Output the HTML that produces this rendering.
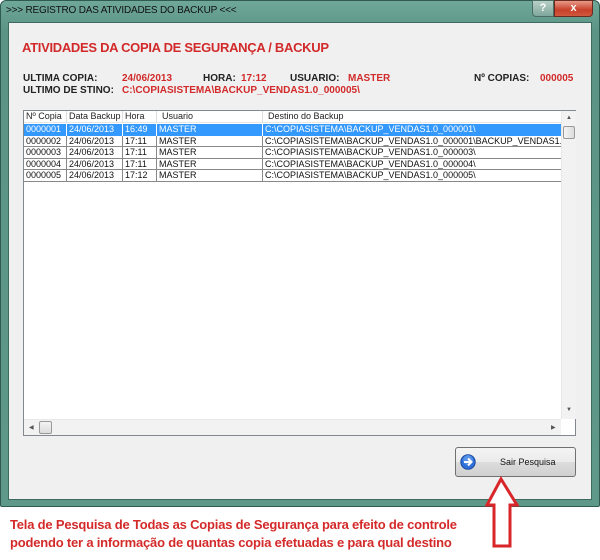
<!DOCTYPE html>
<html><head><meta charset="utf-8"><style>
*{margin:0;padding:0;box-sizing:border-box}
body{width:600px;height:560px;background:#fff;position:relative;overflow:hidden;font-family:"Liberation Sans",sans-serif}
.abs{position:absolute}
.frame{left:0;top:0;width:600px;height:507px;background:linear-gradient(#6fa898,#5b9484 30px,#5e9888);border-radius:6px 6px 2px 2px;border:1px solid #2f5a50}
.client{left:8px;top:22px;width:584px;height:478px;background:#f0f0f0;border:1px solid #3f6a60}
.title{left:6px;top:5px;font-size:10px;color:#111;letter-spacing:-0.2px}
.lbl{font-size:10px;font-weight:bold;color:#222}
.red{color:#d22a2a}
.lbl.red{color:#d22a2a}
.list{left:23px;top:110px;width:553px;height:326px;background:#fff;border:1px solid #828790}
.hdr{left:0;top:0;height:12px;width:537px;font-size:9px;color:#222;background:#fff;border-bottom:1px solid #e5e5e5}
.row{left:0;height:11.6px;width:537px;font-size:9px;color:#111}
.c{position:absolute;top:0;height:100%;border-right:1px solid #888;padding-left:2px;white-space:nowrap;overflow:hidden;line-height:11px}
.sel{background:#3399ff;color:#fff}
.sel .c{border-right-color:#fff}
</style></head><body>
<div class="abs frame"></div>
<div class="abs title">&gt;&gt;&gt; REGISTRO DAS ATIVIDADES DO BACKUP &lt;&lt;&lt;</div>
<div class="abs" style="left:532px;top:0;width:22px;height:17px;background:linear-gradient(#b8d0c8,#7fa69a);border:1px solid #4a6e64;border-radius:0 0 0 4px;color:#fff;font-size:11px;font-weight:bold;text-align:center;line-height:15px">?</div>
<div class="abs" style="left:554px;top:0;width:39px;height:17px;background:linear-gradient(#e89a88,#c8402a 60%,#d0583e);border:1px solid #6a2a20;border-radius:0 0 4px 0;color:#fff;font-size:11px;font-weight:bold;text-align:center;line-height:15px">x</div>
<div class="abs client"></div>
<div class="abs red" style="left:22px;top:40px;font-size:13px;font-weight:bold;letter-spacing:-0.3px">ATIVIDADES DA COPIA DE SEGURANÇA / BACKUP</div>
<div class="abs lbl" style="left:23px;top:73px">ULTIMA COPIA:</div>
<div class="abs lbl red" style="left:122px;top:73px">24/06/2013</div>
<div class="abs lbl" style="left:203px;top:73px">HORA:</div>
<div class="abs lbl red" style="left:241px;top:73px">17:12</div>
<div class="abs lbl" style="left:290px;top:73px">USUARIO:</div>
<div class="abs lbl red" style="left:348px;top:73px">MASTER</div>
<div class="abs lbl" style="left:474px;top:73px">Nº COPIAS:</div>
<div class="abs lbl red" style="left:540px;top:73px">000005</div>
<div class="abs lbl" style="left:23px;top:85px">ULTIMO DE STINO:</div>
<div class="abs lbl red" style="left:122px;top:85px">C:\COPIASISTEMA\BACKUP_VENDAS1.0_000005\</div>
<div class="abs list">
 <div class="abs hdr">
  <div class="c" style="left:0;width:43px;border-right-color:#ddd">Nº Copia</div>
  <div class="c" style="left:43px;width:56px;border-right-color:#ddd">Data Backup</div>
  <div class="c" style="left:99px;width:34px;border-right-color:#ddd">Hora</div>
  <div class="c" style="left:133px;width:106px;border-right-color:#ddd;padding-left:5px">Usuario</div>
  <div class="c" style="left:239px;width:298px;border-right:none;padding-left:5px">Destino do Backup</div>
 </div>
 <div class="abs row sel" style="top:13px"><div class="c" style="left:0;width:43px">0000001</div><div class="c" style="left:43px;width:56px">24/06/2013</div><div class="c" style="left:99px;width:34px">16:49</div><div class="c" style="left:133px;width:106px">MASTER</div><div class="c" style="left:239px;width:298px;border:none">C:\COPIASISTEMA\BACKUP_VENDAS1.0_000001\</div></div>
 <div class="abs row" style="top:24.6px;border-bottom:1px solid #888"><div class="c" style="left:0;width:43px">0000002</div><div class="c" style="left:43px;width:56px">24/06/2013</div><div class="c" style="left:99px;width:34px">17:11</div><div class="c" style="left:133px;width:106px">MASTER</div><div class="c" style="left:239px;width:298px;border:none">C:\COPIASISTEMA\BACKUP_VENDAS1.0_000001\BACKUP_VENDAS1.0</div></div>
 <div class="abs row" style="top:36.2px;border-bottom:1px solid #888"><div class="c" style="left:0;width:43px">0000003</div><div class="c" style="left:43px;width:56px">24/06/2013</div><div class="c" style="left:99px;width:34px">17:11</div><div class="c" style="left:133px;width:106px">MASTER</div><div class="c" style="left:239px;width:298px;border:none">C:\COPIASISTEMA\BACKUP_VENDAS1.0_000003\</div></div>
 <div class="abs row" style="top:47.8px;border-bottom:1px solid #888"><div class="c" style="left:0;width:43px">0000004</div><div class="c" style="left:43px;width:56px">24/06/2013</div><div class="c" style="left:99px;width:34px">17:11</div><div class="c" style="left:133px;width:106px">MASTER</div><div class="c" style="left:239px;width:298px;border:none">C:\COPIASISTEMA\BACKUP_VENDAS1.0_000004\</div></div>
 <div class="abs row" style="top:59.4px;border-bottom:1px solid #888"><div class="c" style="left:0;width:43px">0000005</div><div class="c" style="left:43px;width:56px">24/06/2013</div><div class="c" style="left:99px;width:34px">17:12</div><div class="c" style="left:133px;width:106px">MASTER</div><div class="c" style="left:239px;width:298px;border:none">C:\COPIASISTEMA\BACKUP_VENDAS1.0_000005\</div></div>
 <div class="abs" style="left:537px;top:0;width:15px;height:308px;background:#f2f2f2;border-left:1px solid #e8e8e8">
  <div class="abs" style="left:4px;top:4px;font-size:6px;color:#555">▲</div>
  <div class="abs" style="left:1px;top:15px;width:12px;height:13px;background:linear-gradient(90deg,#f4f4f4,#dcdcdc);border:1px solid #999;border-radius:2px"></div>
  <div class="abs" style="left:4px;top:296px;font-size:6px;color:#555">▼</div>
 </div>
 <div class="abs" style="left:0;top:308px;width:537px;height:16px;background:#f2f2f2;border-top:1px solid #e8e8e8">
  <div class="abs" style="left:5px;top:4px;font-size:6px;color:#555">◀</div>
  <div class="abs" style="left:15px;top:1px;width:13px;height:13px;background:linear-gradient(#f4f4f4,#dcdcdc);border:1px solid #999;border-radius:2px"></div>
  <div class="abs" style="left:527px;top:4px;font-size:6px;color:#555">▶</div>
 </div>
</div>
<div class="abs" style="left:455px;top:447px;width:121px;height:30px;border:1px solid #707070;border-radius:3px;background:linear-gradient(#f4f4f4 0%,#ebebeb 50%,#dcdcdc 51%,#d0d0d0 100%)">
 <svg class="abs" style="left:4px;top:6px" width="16" height="16" viewBox="0 0 16 16"><circle cx="8" cy="8" r="7.2" fill="#2f6fd8" stroke="#1a4aa0"/><circle cx="8" cy="6" r="5" fill="#6fa8f0" opacity=".6"/><path d="M4 8h7M8 4.5L11.5 8 8 11.5" stroke="#fff" stroke-width="2" fill="none"/></svg>
 <div class="abs" style="left:44px;top:9px;font-size:9px;color:#111">Sair Pesquisa</div>
</div>
<svg class="abs" style="left:484px;top:476px" width="38" height="74" viewBox="0 0 38 74"><path d="M17 3L3 29H10V70H26V29H33Z" fill="#fff" stroke="#d8262a" stroke-width="3" stroke-linejoin="miter"/></svg>
<div class="abs red" style="left:10px;top:516px;font-size:13px;font-weight:bold;line-height:18px;color:#d42a2a;letter-spacing:-0.2px">Tela de Pesquisa de Todas as Copias de Segurança para efeito de controle<br>podendo ter a informação de quantas copia efetuadas e para qual destino</div>
</body></html>
